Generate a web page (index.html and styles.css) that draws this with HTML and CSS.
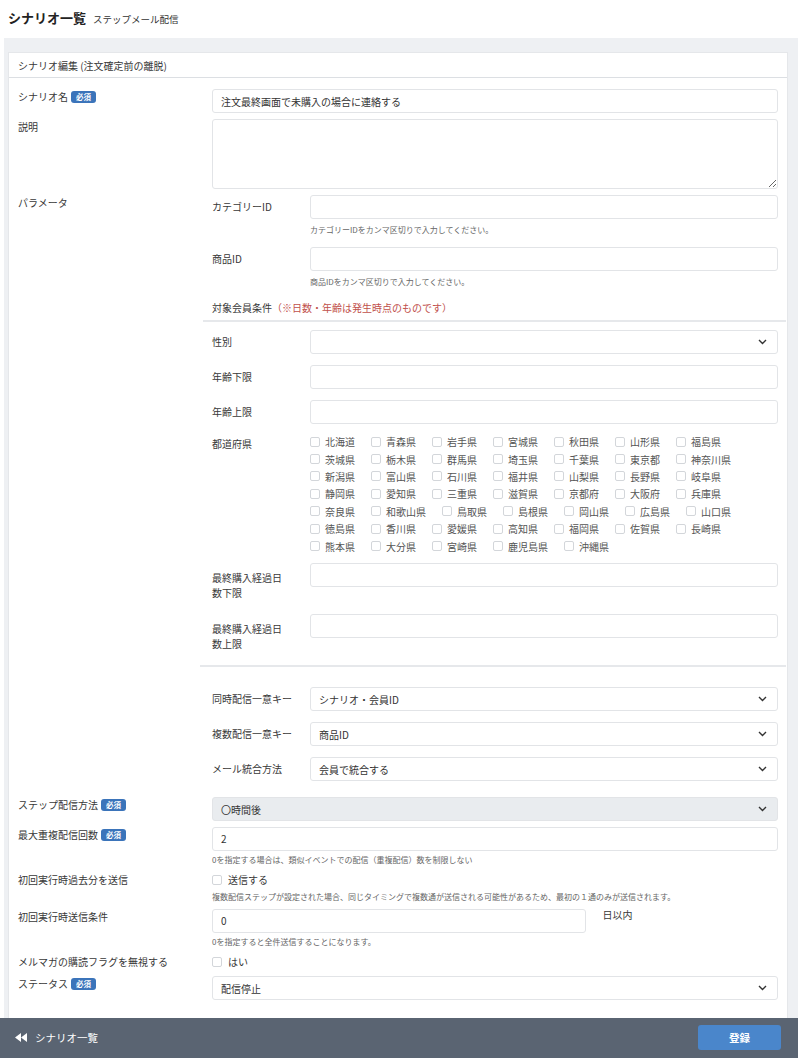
FILE: index.html
```html
<!DOCTYPE html>
<html lang="ja">
<head>
  <meta charset="UTF-8">
  <meta name="viewport" content="width=device-width, initial-scale=1.0">
  <title>シナリオ一覧 ステップメール配信</title>
  <link rel="stylesheet" href="styles.css">
</head>
<body>
  <header class="page-head">
    <h1>シナリオ一覧</h1>
    <span class="sub">ステップメール配信</span>
  </header>

  <main class="page-body">
    <section class="card">
      <div class="card-head">シナリオ編集 (注文確定前の離脱)</div>
      <div class="card-body">

        <div class="row">
          <div class="row-label">シナリオ名 <span class="badge">必須</span></div>
          <div class="field"><input class="control" type="text" value="注文最終画面で未購入の場合に連絡する"></div>
        </div>

        <div class="row">
          <div class="row-label">説明</div>
          <div class="field"><textarea class="control textarea"></textarea></div>
        </div>

        <div class="row row-param">
          <div class="row-label">パラメータ</div>
          <div class="field">
            <div class="sub-row">
              <div class="sub-label">カテゴリーID</div>
              <div>
                <input class="control" type="text">
                <div class="help help-sub">カテゴリーIDをカンマ区切りで入力してください。</div>
              </div>
            </div>
            <div class="sub-row sub-row-last">
              <div class="sub-label">商品ID</div>
              <div>
                <input class="control" type="text">
                <div class="help help-sub">商品IDをカンマ区切りで入力してください。</div>
              </div>
            </div>

            <div class="cond-head">対象会員条件<span class="note">（※日数・年齢は発生時点のものです）</span></div>

            <div class="sub-row">
              <div class="sub-label">性別</div>
              <div class="select">
                <div class="control"></div>
                <svg width="9" height="6" viewBox="0 0 9 6"><polyline points="1,1 4.5,4.5 8,1" fill="none" stroke="#333" stroke-width="1.4"/></svg>
              </div>
            </div>
            <div class="sub-row">
              <div class="sub-label">年齢下限</div>
              <div><input class="control" type="text"></div>
            </div>
            <div class="sub-row sub-row-tight">
              <div class="sub-label">年齢上限</div>
              <div><input class="control" type="text"></div>
            </div>
            <div class="sub-row sub-row-tight">
              <div class="sub-label">都道府県</div>
              <div class="prefs" id="prefs"></div>
            </div>
            <div class="sub-row">
              <div class="sub-label sub-label-wrap">最終購入経過日数下限</div>
              <div><input class="control" type="text"></div>
            </div>
            <div class="sub-row sub-row-none">
              <div class="sub-label sub-label-wrap">最終購入経過日数上限</div>
              <div><input class="control" type="text"></div>
            </div>

            <hr class="divider">

            <div class="sub-row">
              <div class="sub-label">同時配信一意キー</div>
              <div class="select">
                <div class="control">シナリオ・会員ID</div>
                <svg width="9" height="6" viewBox="0 0 9 6"><polyline points="1,1 4.5,4.5 8,1" fill="none" stroke="#333" stroke-width="1.4"/></svg>
              </div>
            </div>
            <div class="sub-row">
              <div class="sub-label">複数配信一意キー</div>
              <div class="select">
                <div class="control">商品ID</div>
                <svg width="9" height="6" viewBox="0 0 9 6"><polyline points="1,1 4.5,4.5 8,1" fill="none" stroke="#333" stroke-width="1.4"/></svg>
              </div>
            </div>
            <div class="sub-row sub-row-none">
              <div class="sub-label">メール統合方法</div>
              <div class="select">
                <div class="control">会員で統合する</div>
                <svg width="9" height="6" viewBox="0 0 9 6"><polyline points="1,1 4.5,4.5 8,1" fill="none" stroke="#333" stroke-width="1.4"/></svg>
              </div>
            </div>
          </div>
        </div>

        <div class="row">
          <div class="row-label">ステップ配信方法 <span class="badge">必須</span></div>
          <div class="select">
            <div class="control disabled">〇時間後</div>
            <svg width="9" height="6" viewBox="0 0 9 6"><polyline points="1,1 4.5,4.5 8,1" fill="none" stroke="#333" stroke-width="1.4"/></svg>
          </div>
        </div>

        <div class="row">
          <div class="row-label">最大重複配信回数 <span class="badge">必須</span></div>
          <div class="field">
            <input class="control" type="text" value="2">
            <div class="help">0を指定する場合は、類似イベントでの配信（重複配信）数を制限しない</div>
          </div>
        </div>

        <div class="row">
          <div class="row-label">初回実行時過去分を送信</div>
          <div class="field">
            <label class="check"><span class="box"></span>送信する</label>
            <div class="help">複数配信ステップが設定された場合、同じタイミングで複数通が送信される可能性があるため、最初の１通のみが送信されます。</div>
          </div>
        </div>

        <div class="row">
          <div class="row-label">初回実行時送信条件</div>
          <div class="field">
            <div class="inline">
              <input class="control short" type="text" value="0">
              <span class="unit">日以内</span>
            </div>
            <div class="help">0を指定すると全件送信することになります。</div>
          </div>
        </div>

        <div class="row">
          <div class="row-label">メルマガの購読フラグを無視する</div>
          <div class="field">
            <label class="check"><span class="box"></span>はい</label>
          </div>
        </div>

        <div class="row row-last">
          <div class="row-label">ステータス <span class="badge">必須</span></div>
          <div class="select">
            <div class="control">配信停止</div>
            <svg width="9" height="6" viewBox="0 0 9 6"><polyline points="1,1 4.5,4.5 8,1" fill="none" stroke="#333" stroke-width="1.4"/></svg>
          </div>
        </div>

      </div>
    </section>
  </main>

  <footer class="foot">
    <a class="back" href="#">
      <svg width="12" height="9" viewBox="0 0 12 9"><polygon points="6,0 6,9 0,4.5" fill="#fff"/><polygon points="12,0 12,9 6,4.5" fill="#fff"/></svg>
      シナリオ一覧
    </a>
    <button class="submit">登録</button>
  </footer>

  <script>
    const prefs = ["北海道","青森県","岩手県","宮城県","秋田県","山形県","福島県",
      "茨城県","栃木県","群馬県","埼玉県","千葉県","東京都","神奈川県",
      "新潟県","富山県","石川県","福井県","山梨県","長野県","岐阜県",
      "静岡県","愛知県","三重県","滋賀県","京都府","大阪府","兵庫県",
      "奈良県","和歌山県","鳥取県","島根県","岡山県","広島県","山口県",
      "徳島県","香川県","愛媛県","高知県","福岡県","佐賀県","長崎県",
      "熊本県","大分県","宮崎県","鹿児島県","沖縄県"];
    const box = document.getElementById("prefs");
    prefs.forEach(name => {
      const item = document.createElement("label");
      item.className = "pref";
      item.innerHTML = '<span class="box"></span>' + name;
      box.appendChild(item);
    });
  </script>
</body>
</html>
```

FILE: styles.css
```css
/* Base */
* {
  box-sizing: border-box;
}

body {
  margin: 0;
  font-family: "Noto Sans CJK JP", "Noto Sans", sans-serif;
  font-size: 10px;
  color: #383838;
  background: #fff;
}

/* Page header */
.page-head {
  height: 38px;
  padding: 8px 8px 0;
  display: flex;
  align-items: baseline;
  gap: 7px;
}

.page-head h1 {
  margin: 0;
  font-size: 13px;
  line-height: 20px;
  font-weight: bold;
  color: #222;
}

.page-head .sub {
  font-size: 9.5px;
  color: #333;
}

/* Page body */
.page-body {
  background: #eef0f3;
  margin-left: 4px;
  padding: 14px 10px 0 4px;
}

.card {
  background: #fff;
  border: 1px solid #e5e7ea;
  border-bottom: none;
}

.card-head {
  height: 25px;
  line-height: 25px;
  padding: 0 9px;
  border-bottom: 1px solid #dcdfe3;
}

.card-body {
  padding: 11px 9px 18px;
}

/* Rows */
.row {
  display: grid;
  grid-template-columns: 194px 1fr;
  margin-bottom: 6px;
}

.row-param {
  margin-bottom: 16px;
}

.row-last {
  margin-bottom: 0;
}

.row-label {
  display: flex;
  align-items: center;
  align-self: start;
  gap: 3px;
  line-height: 16px;
}

.badge {
  display: inline-block;
  height: 12px;
  line-height: 12px;
  padding: 0 5px;
  border-radius: 3px;
  background: #3b74ba;
  color: #fff;
  font-size: 7.5px;
  font-weight: bold;
}

/* Controls */
.control {
  display: block;
  width: 100%;
  height: 24px;
  line-height: 22px;
  padding: 0 8px;
  border: 1px solid #e2e4e7;
  border-radius: 3px;
  background: #fff;
  font: inherit;
  font-size: 10px;
  color: #333;
  outline: none;
}

div.control {
  padding-top: 2px;
  line-height: 20px;
}

.textarea {
  height: 70px;
  resize: vertical;
}

.control.disabled {
  background: #e9ecef;
}

.select {
  position: relative;
}

.select svg {
  position: absolute;
  right: 11px;
  top: 9px;
}

.help {
  margin-top: 3px;
  font-size: 8px;
  line-height: 12px;
  color: #666;
}

.help-sub {
  margin-top: 5px;
}

.inline {
  display: flex;
  align-items: flex-start;
}

.control.short {
  width: 66%;
}

.unit {
  margin-left: 17px;
  line-height: 12px;
  font-size: 10px;
}

/* Checkboxes */
.check {
  display: flex;
  align-items: center;
  gap: 6px;
  height: 16px;
  font-size: 10px;
}

.box {
  display: inline-block;
  width: 10px;
  height: 10px;
  border: 1px solid #d3d6da;
  border-radius: 2px;
  background: #fff;
}

/* Parameter sub-form */
.sub-row {
  display: grid;
  grid-template-columns: 98px 1fr;
  margin-bottom: 11px;
}

.sub-row-last {
  margin-bottom: 12px;
}

.sub-row-tight {
  margin-bottom: 8px;
}

.sub-row-none {
  margin-bottom: 0;
}

.sub-label {
  padding-top: 4px;
  line-height: 16px;
}

.sub-label-wrap {
  padding: 7px 22px 3px 0;
  line-height: 15px;
}

.cond-head {
  margin: 0 -8px 8px -9px;
  padding: 0 0 4px 9px;
  line-height: 16px;
  border-bottom: 2px solid #e6e8eb;
}

.cond-head .note {
  color: #bf4f4b;
}

.divider {
  margin: 11px -8px 20px -12px;
  border: none;
  border-top: 2px solid #e6e8eb;
}

.prefs {
  display: flex;
  flex-wrap: wrap;
  padding-top: 1px;
}

.pref {
  display: flex;
  align-items: center;
  gap: 5px;
  height: 17.4px;
  margin-right: 16px;
  color: #555;
}

/* Footer */
.foot {
  height: 40px;
  background: #5a6472;
  display: flex;
  align-items: center;
  justify-content: space-between;
  padding: 0 17px 0 15px;
}

.back {
  display: flex;
  align-items: center;
  gap: 8px;
  color: #fff;
  text-decoration: none;
  font-size: 10.5px;
}

.submit {
  width: 83px;
  height: 25px;
  border: none;
  border-radius: 3px;
  background: #4a86cb;
  color: #fff;
  font-family: inherit;
  font-size: 10.5px;
  font-weight: bold;
}
```
